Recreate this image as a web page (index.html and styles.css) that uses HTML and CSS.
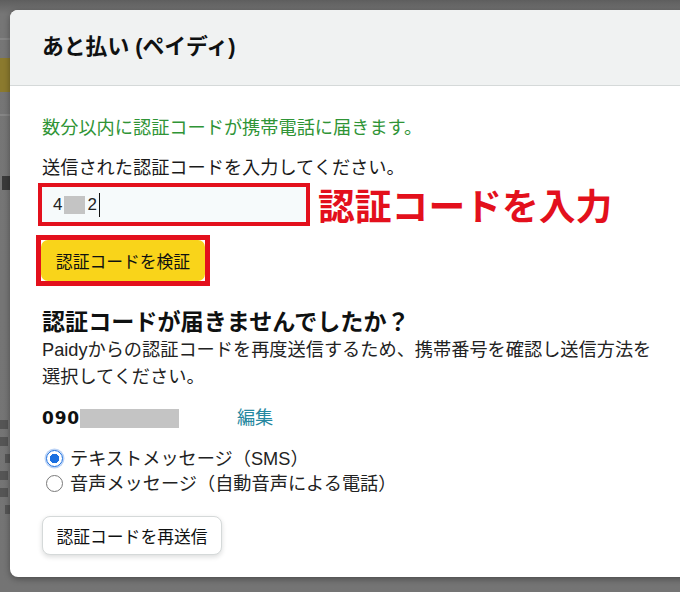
FILE: index.html
```html
<!DOCTYPE html>
<html lang="ja">
<head>
<meta charset="utf-8">
<title>あと払い (ペイディ)</title>
<link rel="stylesheet" href="styles.css">
</head>
<body>
<div class="backdrop">
  <div class="bd-line"></div>
  <div class="bd-yellow"></div>
  <div class="bd-line2"></div>
  <div class="bd-word"></div>
  <div class="bd-text">
    <div class="bd-bar"></div><div class="bd-bar"></div><div class="bd-bar short"></div><div class="bd-bar"></div><div class="bd-bar"></div><div class="bd-bar short"></div>
  </div>
</div>

<div class="modal">
  <div class="modal-header">
    <h1 class="modal-title">あと払い (ペイディ)</h1>
  </div>
  <div class="modal-body">
    <p class="notice">数分以内に認証コードが携帯電話に届きます。</p>
    <p class="label">送信された認証コードを入力してください。</p>
    <div class="input-row">
      <div class="mark-input">
        <div class="code-input"><span>4</span><span class="mask mask-code"></span><span class="digit2">2</span><span class="caret"></span></div>
      </div>
      <div class="annotation">認証コードを入力</div>
    </div>
    <div class="mark-button">
      <button class="btn-primary">認証コードを検証</button>
    </div>
    <h2 class="sub-heading">認証コードが届きませんでしたか？</h2>
    <p class="desc">Paidyからの認証コードを再度送信するため、携帯番号を確認し送信方法を選択してください。</p>
    <div class="phone-row">
      <span class="phone">090</span><span class="mask mask-phone"></span>
      <a class="edit-link">編集</a>
    </div>
    <div class="radio-group">
      <label class="radio-row"><span class="radio checked"></span><span>テキストメッセージ（SMS）</span></label>
      <label class="radio-row"><span class="radio"></span><span>音声メッセージ（自動音声による電話）</span></label>
    </div>
    <button class="btn-secondary">認証コードを再送信</button>
  </div>
</div>
</body>
</html>
```

FILE: styles.css
```css
* { box-sizing: border-box; }
html, body { margin: 0; padding: 0; }
body {
  width: 680px;
  height: 592px;
  overflow: hidden;
  position: relative;
  background: linear-gradient(#5e5e5e 0, #767676 14px, #747474 100%);
  font-family: "Liberation Sans", "Noto Sans CJK JP", sans-serif;
  color: #0f1111;
}

/* dimmed page behind the overlay */
.backdrop {
  width: 10px;
  padding-top: 38px;
}
.bd-line { height: 2px; background: #858585; margin-bottom: 18px; }
.bd-yellow { height: 34px; background: #8b7a2e; }
.bd-line2 { height: 2px; background: #858585; margin-top: 22px; }
.bd-word { margin-top: 60px; height: 14px; width: 8px; margin-left: 2px; background: #3a3a3a; }
.bd-text { margin-top: 230px; }
.bd-bar { height: 9px; width: 8px; background: #555; margin-bottom: 8px; }
.bd-bar.short { width: 5px; margin-left: 5px; }

/* modal */
.modal {
  position: absolute;
  left: 10px;
  top: 10px;
  width: 720px;
  height: 567px;
  background: #fff;
  border-radius: 8px;
  box-shadow: 0 2px 6px rgba(0,0,0,0.35);
  overflow: hidden;
}
.modal-header {
  height: 76px;
  background: #f0f2f2;
  border-bottom: 1px solid #d5d9d9;
  padding: 0 32px;
  display: flex;
  align-items: center;
}
.modal-title {
  margin: 0;
  font-size: 21.8px;
  font-weight: bold;
  line-height: 30px;
  padding-bottom: 2px;
}
.modal-body {
  padding: 30px 32px 0 32px;
  font-size: 18.2px;
  line-height: 24px;
}
p { margin: 0; }
.notice { color: #2f9436; }
.label { margin-top: 16px; color: #1a1a1a; }

.input-row {
  display: flex;
  align-items: center;
  margin-top: 3px;
  margin-left: -4px;
}
.mark-input {
  border: 4px solid #e3101c;
  width: 272px;
}
.code-input {
  height: 35px;
  background: #f6fafb;
  display: flex;
  align-items: center;
  padding-left: 11px;
  font-size: 17px;
  color: #222;
}
.mask { display: inline-block; background: #c4c4c4; }
.mask-code { width: 21px; height: 18px; margin-left: 2px; }
.digit2 { margin-left: 2px; }
.caret { display: inline-block; width: 1.5px; height: 24px; background: #111; margin-left: 2px; }
.annotation {
  margin-left: 8px;
  color: #e3101c;
  font-family: "Noto Sans CJK JP", sans-serif;
  font-weight: bold;
  font-size: 36.8px;
  line-height: 40px;
  padding-bottom: 2px;
}

.mark-button {
  margin-top: 9px;
  margin-left: -6px;
  width: 174px;
  border: 5px solid #e3101c;
  background: #fff;
}
.btn-primary {
  display: block;
  width: 164px;
  height: 41px;
  border: none;
  border-radius: 7px;
  background: #f9d41a;
  font-family: "Liberation Sans", "Noto Sans CJK JP", sans-serif;
  font-size: 16.8px;
  color: #0f1111;
  padding: 0;
}

.sub-heading {
  margin: 21px 0 0 0;
  font-size: 23.1px;
  line-height: 30px;
  font-weight: bold;
}
.desc {
  margin-top: 0;
  max-width: 618px;
  line-height: 27px;
  color: #222;
}

.phone-row {
  margin-top: 15px;
  display: flex;
  align-items: center;
  height: 24px;
}
.phone {
  font-family: "DejaVu Sans", sans-serif;
  font-weight: bold;
  font-size: 17px;
  letter-spacing: 0.8px;
}
.mask-phone { width: 99px; height: 19px; margin-left: 0; }
.edit-link { margin-left: 58px; color: #2588a0; }

.radio-group { margin-top: 16px; display: flex; flex-direction: column; }
.radio-row {
  display: flex;
  align-items: center;
  height: 25px;
  color: #222;
}
.radio {
  width: 17px;
  height: 17px;
  border-radius: 50%;
  border: 1.5px solid #7a7a7a;
  background: #fff;
  margin: 0 7px 0 4px;
  flex: none;
}
.radio.checked {
  border: 1.5px solid #1a6fe0;
  background: radial-gradient(circle, #1a6fe0 0 4.5px, #fff 5px);
  box-shadow: 0 0 0 1.5px #bcd3f5;
}

.btn-secondary {
  margin-top: 20px;
  height: 39px;
  width: 180px;
  border: 1px solid #d5d9d9;
  border-radius: 8px;
  background: #fff;
  box-shadow: 0 2px 5px rgba(15,17,17,0.15);
  font-family: "Liberation Sans", "Noto Sans CJK JP", sans-serif;
  font-size: 16.8px;
  color: #0f1111;
  padding: 0;
}
```
